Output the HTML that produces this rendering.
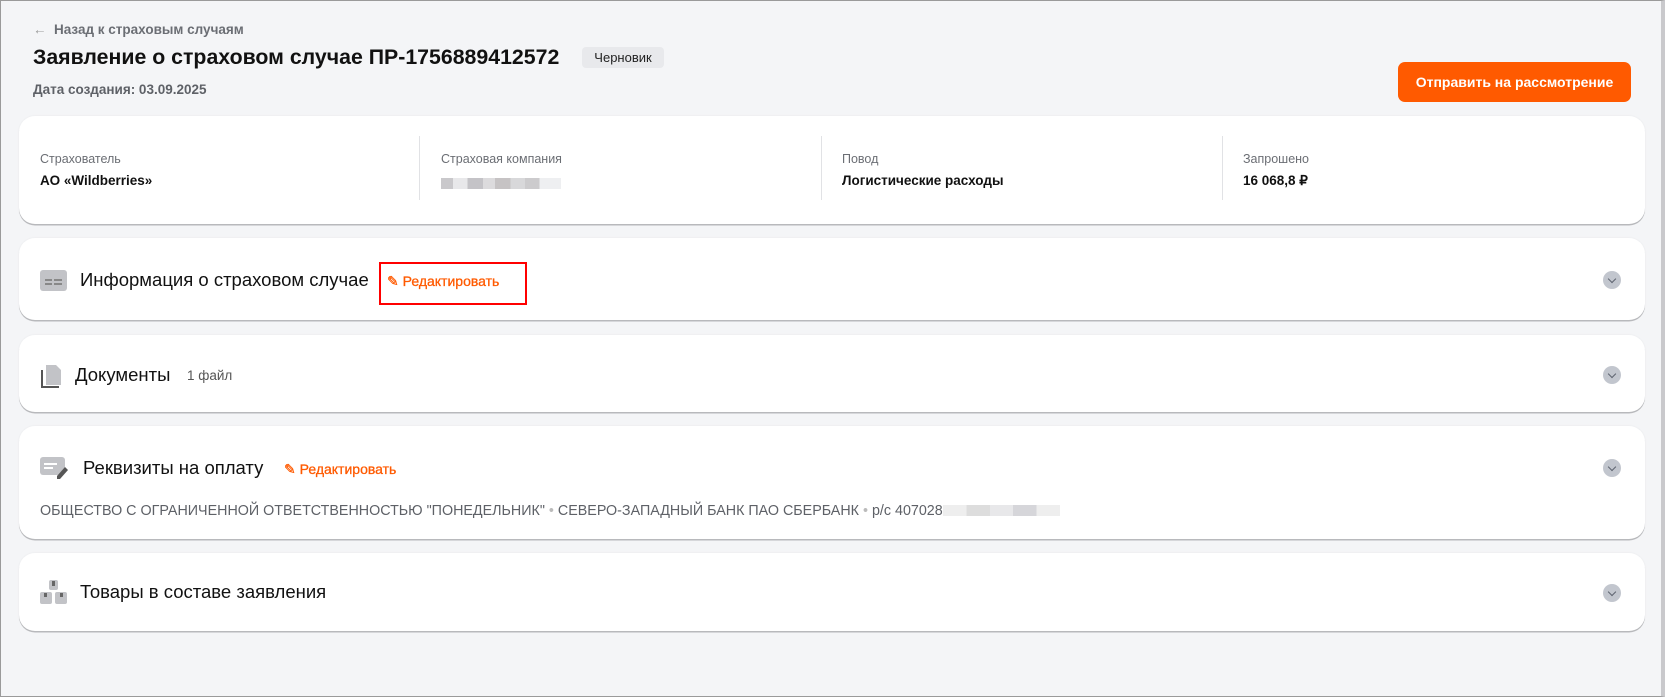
<!DOCTYPE html>
<html><head><meta charset="utf-8"><style>
*{box-sizing:border-box;margin:0;padding:0}
html,body{width:1665px;height:697px;overflow:hidden}
body{background:#f4f5f7;font-family:"Liberation Sans",sans-serif;color:#111;position:relative;border:1px solid #9a9a9a;border-right:4px solid #c9c9cc}
.abs{position:absolute}
.card{position:absolute;left:18px;width:1626px;background:#fff;border-radius:16px;box-shadow:0 1.5px 0 #b8b9bc,0 0 2px rgba(0,0,0,.06)}
.lab{font-size:12.5px;color:#6b6e74}
.val{font-size:13.5px;font-weight:bold;color:#111}
.div{position:absolute;top:20px;width:1px;height:64px;background:#e1e2e5}
.h{position:absolute;font-size:18.5px;color:#111;white-space:nowrap}
.edit{position:absolute;color:#ff5a00;font-size:14px;white-space:nowrap;-webkit-text-stroke:0.3px #ff5a00}
.chev{position:absolute;right:24px;width:18px;height:18px;border-radius:50%;background:#c2c6ce}
.chev:after{content:"";position:absolute;left:5.5px;top:4.5px;width:5px;height:5px;border-right:1.6px solid #5e6470;border-bottom:1.6px solid #5e6470;transform:rotate(45deg)}
.blur{display:inline-block;height:11px;background:linear-gradient(90deg,#c9c8cb 0 10%,#e8e8ea 10% 22%,#c4c3c7 22% 35%,#dcdbdd 35% 45%,#c6c3c4 45% 58%,#d8d8da 58% 70%,#cccbcd 70% 82%,#eeeff1 82%)}
</style></head><body>
<div class="abs" style="left:32px;top:21px;font-size:13.5px;color:#6b6e74;font-weight:bold"><span style="font-weight:normal;color:#999">&#8592;</span>&nbsp; Назад к страховым случаям</div>
<div class="abs" style="left:32px;top:44px;font-size:21.3px;font-weight:bold;color:#111">Заявление о страховом случае ПР-1756889412572</div>
<div class="abs" style="left:581px;top:46px;width:82px;height:21px;background:#e8e9ec;border-radius:4px;font-size:13px;color:#222;text-align:center;line-height:21px">Черновик</div>
<div class="abs" style="left:32px;top:81px;font-size:13.5px;font-weight:bold;color:#5e6167">Дата создания: 03.09.2025</div>
<div class="abs" style="left:1397px;top:61px;width:233px;height:40px;background:#ff5a00;border-radius:7px;color:#fff;font-size:14px;font-weight:bold;text-align:center;line-height:40px">Отправить на рассмотрение</div>

<div class="card" style="top:115px;height:108px">
 <div class="abs lab" style="left:21px;top:36px">Страхователь</div>
 <div class="abs val" style="left:21px;top:57px">АО «Wildberries»</div>
 <div class="div" style="left:400px"></div>
 <div class="abs lab" style="left:422px;top:36px">Страховая компания</div>
 <div class="abs" style="left:422px;top:60px"><span class="blur" style="width:120px"></span></div>
 <div class="div" style="left:802px"></div>
 <div class="abs lab" style="left:823px;top:36px">Повод</div>
 <div class="abs val" style="left:823px;top:57px">Логистические расходы</div>
 <div class="div" style="left:1203px"></div>
 <div class="abs lab" style="left:1224px;top:36px">Запрошено</div>
 <div class="abs val" style="left:1224px;top:57px">16 068,8 ₽</div>
</div>

<div class="card" style="top:237px;height:82px">
 <svg class="abs" style="left:21px;top:32px" width="27" height="21"><rect width="27" height="21" rx="3" fill="#c2c3c7"/><rect x="5" y="9" width="7" height="2" fill="#888"/><rect x="14" y="9" width="8" height="2" fill="#888"/><rect x="5" y="13" width="7" height="2" fill="#888"/><rect x="14" y="13" width="8" height="2" fill="#888"/></svg>
 <div class="h" style="left:61px;top:31px">Информация о страховом случае</div>
 <div class="abs" style="left:360px;top:24px;width:148px;height:43px;border:2.5px solid #f00"></div>
 <div class="edit" style="left:368px;top:35px">✎ Редактировать</div>
 <div class="chev" style="top:33px"></div>
</div>

<div class="card" style="top:334px;height:77px">
 <svg class="abs" style="left:21px;top:29px" width="24" height="25"><path d="M2 6v17h17" stroke="#555" stroke-width="2" fill="none"/><path d="M6 1h10l5 5v15H6z" fill="#c2c3c7"/></svg>
 <div class="h" style="left:56px;top:29px">Документы</div>
 <div class="abs" style="left:168px;top:33px;font-size:13.5px;color:#555">1 файл</div>
 <div class="chev" style="top:31px"></div>
</div>

<div class="card" style="top:425px;height:113px">
 <svg class="abs" style="left:21px;top:31px" width="30" height="22"><rect width="25" height="18" rx="3" fill="#c2c3c7"/><rect x="4" y="6" width="13" height="2" fill="#fff"/><rect x="4" y="10" width="9" height="2" fill="#fff"/><path d="M17 19l8-9 3 3-8 9h-3z" fill="#555"/></svg>
 <div class="h" style="left:64px;top:31px">Реквизиты на оплату</div>
 <div class="edit" style="left:265px;top:35px">✎ Редактировать</div>
 <div class="chev" style="top:33px"></div>
 <div class="abs" style="left:21px;top:77px;font-size:14.3px;color:#5e6167;white-space:nowrap">ОБЩЕСТВО С ОГРАНИЧЕННОЙ ОТВЕТСТВЕННОСТЬЮ "ПОНЕДЕЛЬНИК" <span style="color:#bbb">•</span> СЕВЕРО-ЗАПАДНЫЙ БАНК ПАО СБЕРБАНК <span style="color:#bbb">•</span> р/с 407028<span class="blur" style="width:117px;vertical-align:-1px;background:linear-gradient(90deg,#eee 0 20%,#ddd 20% 40%,#e8e8ea 40% 60%,#d6d6da 60% 80%,#eee 80%)"></span></div>
</div>

<div class="card" style="top:552px;height:78px">
 <svg class="abs" style="left:21px;top:27px" width="27" height="25"><rect x="9" y="0" width="9" height="10" rx="2" fill="#c2c3c7"/><rect x="0" y="12" width="12" height="12" rx="2" fill="#c2c3c7"/><rect x="15" y="12" width="12" height="12" rx="2" fill="#c2c3c7"/><rect x="12" y="1" width="3" height="5" fill="#666"/><rect x="4" y="13" width="3" height="4" fill="#666"/><rect x="20" y="13" width="3" height="4" fill="#666"/></svg>
 <div class="h" style="left:61px;top:28px">Товары в составе заявления</div>
 <div class="chev" style="top:31px"></div>
</div>
</body></html>
